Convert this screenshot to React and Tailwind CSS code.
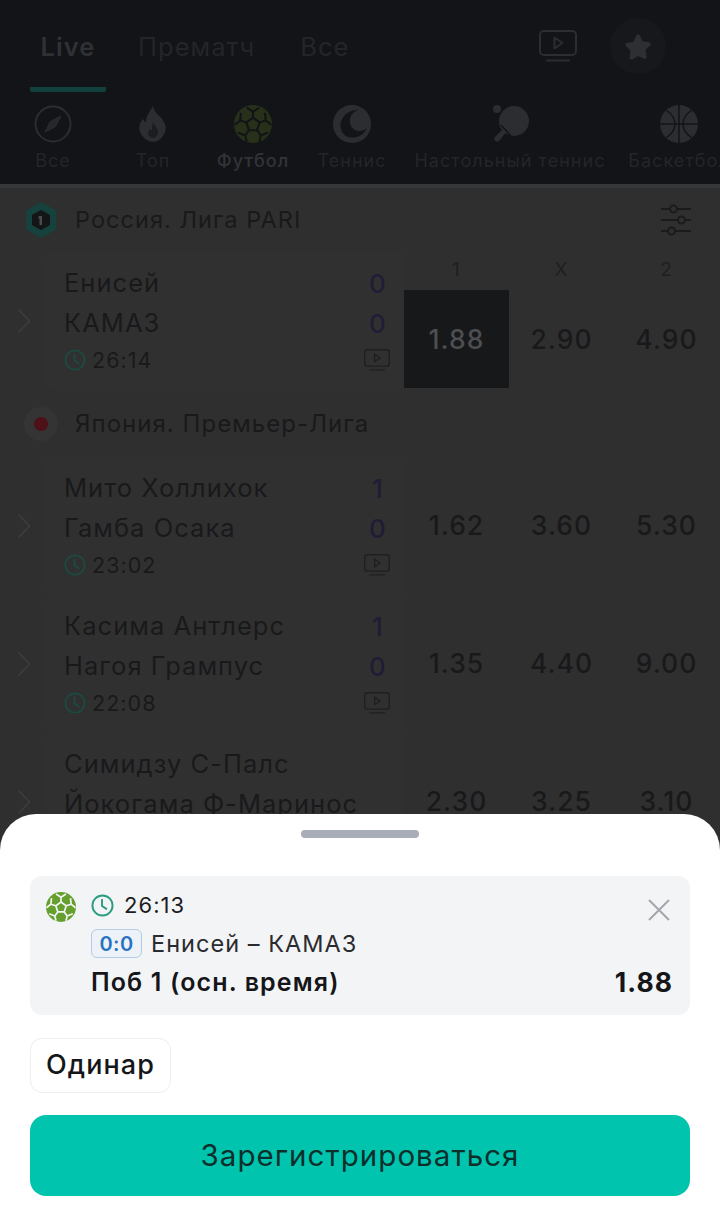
const sports = [
  { name: 'Все', icon: 'compass', width: 'w-[106px]' },
  { name: 'Топ', icon: 'flame', width: 'w-[94px]' },
  { name: 'Футбол', icon: 'ball', width: 'w-[106px]', active: true },
  { name: 'Теннис', icon: 'tennis', width: 'w-[92px]' },
  { name: 'Настольный теннис', icon: 'paddle', width: 'w-[224px]' },
  { name: 'Баскетбол', icon: 'basket', width: 'w-[114px]' },
];

const japan = [
  { home: 'Мито Холлихок', away: 'Гамба Осака', homeScore: 1, awayScore: 0, time: '23:02', odds: ['1.62', '3.60', '5.30'] },
  { home: 'Касима Антлерс', away: 'Нагоя Грампус', homeScore: 1, awayScore: 0, time: '22:08', odds: ['1.35', '4.40', '9.00'] },
  { home: 'Симидзу С-Палс', away: 'Йокогама Ф-Маринос', odds: ['2.30', '3.25', '3.10'] },
];

function Ball({ size, fill, line }) {
  return (
    <svg width={size} height={size} viewBox="0 0 30 30">
      <circle cx="15" cy="15" r="15" fill={fill} />
      <g fill="none" stroke={line} strokeWidth="1.7">
        <path d="M15 10l5.200 3.800-2 6.100h-6.400l-2-6.100z" />
        <path d="M15 10V5.200M20.200 13.800l4.900-1.600M18.200 19.900l3 4.100M11.800 19.900l-3 4.100M9.800 13.800l-4.900-1.600" />
        <path d="M15 5.200l-5-3.200M15 5.200l5-3.200M25.100 12.200l-.6-6M25.100 12.200l4.400 3.600M21.200 24l5.600-2.200M21.200 24l-1.200 4.800M8.800 24l-5.600-2.200M8.800 24l1.200 4.800M4.900 12.200l.6-6M4.900 12.200L.5 15.800" />
      </g>
    </svg>
  );
}

function Clock({ size, color }) {
  return (
    <svg width={size} height={size} viewBox="0 0 24 24" fill="none" stroke={color} strokeWidth="2" strokeLinecap="round" strokeLinejoin="round">
      <circle cx="12" cy="12" r="10.500" />
      <path d="M11.500 6v6.500l4.500 3" />
    </svg>
  );
}

function TvIcon({ width, height, color }) {
  return (
    <svg width={width} height={height} viewBox="0 0 38 32" fill="none" stroke={color} strokeWidth="2" strokeLinecap="round" strokeLinejoin="round">
      <rect x="1" y="1" width="36" height="24" rx="4" />
      <path d="M15.500 7.500l8 5.500-8 5.500z" />
      <path d="M8 30.500h22" />
    </svg>
  );
}

function SportIcon({ type }) {
  const c = '#2c2d30';
  if (type === 'ball') return <Ball size={38} fill="#27311a" line="#131417" />;
  if (type === 'compass') {
    return (
      <svg width="38" height="38" viewBox="0 0 38 38" fill="none" stroke={c} strokeWidth="2">
        <circle cx="19" cy="19" r="17.500" />
        <path d="M27 11l-5.500 10.500L11 27l5.500-10.500z" fill="#26272a" strokeWidth="1" />
      </svg>
    );
  }
  if (type === 'flame') {
    return (
      <svg width="30" height="38" viewBox="0 0 30 38">
        <path d="M15 1c1 6 5 8 9 13 4 5 5 10 2 15-2 5-7 8-11 8s-9-3-12-8C0 24 1 18 5 14c1 2 2 3 3 3 0-6 4-11 7-16z" fill={c} />
        <path d="M15 17c1 4 6 6 5 11-1 3-3 5-5 5s-5-2-5-5c0-2 1-3 2-4 1 1 1 1 2 1 0-3 0-5 1-8z" fill="#1c1d20" />
      </svg>
    );
  }
  if (type === 'tennis') {
    return (
      <svg width="38" height="38" viewBox="0 0 38 38">
        <circle cx="19" cy="19" r="19" fill={c} />
        <path d="M26 4.500C15 5 7 12 7.500 21c.3 5 3 9 7.500 11 8 2 15-1 19-9-3 3-8 4-12 2-5-3-6-8-4.500-13 1-3 4-6 8.500-7.500z" fill="#131417" />
      </svg>
    );
  }
  if (type === 'paddle') {
    return (
      <svg width="40" height="40" viewBox="0 0 40 40">
        <circle cx="7" cy="5" r="4" fill={c} />
        <circle cx="24" cy="17" r="15" fill={c} />
        <path d="M14 24L5 33c-1.500 1.500-1 3 .5 4s2.500 1 3.500 0l9-11z" fill={c} />
        <path d="M11 21l10 11" stroke="#131417" strokeWidth="1.500" />
      </svg>
    );
  }
  return (
    <svg width="38" height="38" viewBox="0 0 38 38" fill="none">
      <circle cx="19" cy="19" r="19" fill={c} />
      <path d="M0 19h38M19 0v38M6 5c6 4 9 9 9 14s-3 10-9 14M32 5c-6 4-9 9-9 14s3 10 9 14" stroke="#131417" strokeWidth="1.500" />
    </svg>
  );
}

function MatchRow({ match, selected }) {
  return (
    <div className="flex h-[138px]">
      <div className="flex w-[46px] shrink-0 items-center pl-[17px]">
        <svg width="14" height="26" viewBox="0 0 14 26" fill="none" stroke="#3c3c3e" strokeWidth="1.800">
          <path d="M1.500 1.500L12.500 13 1.500 24.500" />
        </svg>
      </div>
      <div className="w-[358px] shrink-0 rounded-[6px] bg-[#303030] pl-[18px] pr-[14px] pt-[11px]">
        <div className="flex h-[40px] items-center justify-between text-[#19191b]">
          <span className="whitespace-nowrap text-[25.500px]">{match.home}</span>
          <span className="w-[24px] text-center text-[26px] font-medium text-[#1f1d36]">{match.homeScore}</span>
        </div>
        <div className="flex h-[40px] items-center justify-between text-[#19191b]">
          <span className="whitespace-nowrap text-[25.500px]">{match.away}</span>
          <span className="w-[24px] text-center text-[26px] font-medium text-[#1f1d36]">{match.awayScore}</span>
        </div>
        {match.time && (
          <div className="flex h-[34px] items-center justify-between">
            <div className="flex items-center gap-[6px] text-[21.500px] text-[#19191b]">
              <Clock size={22} color="#1c4a41" />
              <span>{match.time}</span>
            </div>
            <TvIcon width={26} height={22} color="#1e1f21" />
          </div>
        )}
      </div>
      <div className={`flex flex-1 text-[26.500px] font-medium text-[#19191b] ${selected ? 'pt-[38px]' : 'pt-[19px]'}`}>
        {match.odds.map((odd, i) => (
          <div
            key={odd}
            className={`flex h-[98px] w-[105px] items-center justify-center pt-[2px] ${selected && i === 0 ? 'bg-[#17181a] text-[#4d4e51]' : ''}`}
          >
            {odd}
          </div>
        ))}
      </div>
    </div>
  );
}

function App() {
  return (
    <div className="relative h-[1226px] w-[720px] overflow-hidden bg-[#2f2f2f] font-['Inter',sans-serif] tracking-[0.065em]">
      {/* Top nav */}
      <div className="bg-[#131417]">
        <div className="flex h-[92px] items-start justify-between pl-[30px] pr-[54px]">
          <div className="flex text-[25.500px] text-[#242528]">
            <div className="flex h-[92px] w-[76px] flex-col items-center rounded-b-[2px] border-b-[5px] border-[#12403c] pt-[28px] font-semibold text-[#303135]">
              Live
            </div>
            <div className="ml-[32px] pt-[28px]">Прематч</div>
            <div className="ml-[45px] pt-[28px]">Все</div>
          </div>
          <div className="flex items-center pt-[18px]">
            <TvIcon width={38} height={32} color="#2c2d30" />
            <div className="ml-[33px] flex h-[56px] w-[56px] items-center justify-center rounded-full bg-[#17181b]">
              <svg width="30" height="30" viewBox="0 0 24 24" fill="#2e2f33">
                <path d="M12 2.500c.7 0 1.200.4 1.500 1l2.200 4.700 5 .7c1.400.2 1.900 1.800.9 2.700l-3.600 3.600.8 5.100c.2 1.400-1.200 2.400-2.400 1.700L12 20l-4.400 2.500c-1.200.7-2.600-.3-2.400-1.700l.8-5.100-3.600-3.600c-1-.9-.5-2.500.9-2.700l5-.7 2.200-4.700c.3-.6.8-1 1.500-1z" />
              </svg>
            </div>
          </div>
        </div>

        {/* Sports */}
        <div className="flex h-[92px] overflow-hidden">
          {sports.map((s) => (
            <div key={s.name} className={`${s.width} flex shrink-0 flex-col items-center pt-[13px]`}>
              <div className="flex h-[38px] items-center">
                <SportIcon type={s.icon} />
              </div>
              <span className={`mt-[4px] whitespace-nowrap text-[18px] ${s.active ? 'font-medium text-[#323337]' : 'text-[#242528]'}`}>
                {s.name}
              </span>
            </div>
          ))}
        </div>
      </div>
      <div className="h-[4px] bg-[#363738]" />

      {/* Russia league */}
      <div className="flex h-[64px] items-center justify-between pl-[24px] pr-[28px]">
        <div className="flex items-center gap-[17px]">
          <svg width="34" height="38" viewBox="0 0 34 38">
            <path d="M17 1l15 8.500v19L17 37 2 28.500v-19z" fill="#16423d" />
            <path d="M17 9l9 5v10l-9 5-9-5V14z" fill="#141517" />
            <path d="M15 15h3v9h-2.500v-6.500H14z" fill="#4a4b4d" />
          </svg>
          <span className="text-[23.500px] text-[#19191b]">Россия. Лига PARI</span>
        </div>
        <svg width="32" height="32" viewBox="0 0 32 32" fill="none" stroke="#1a1b1d" strokeWidth="2">
          <path d="M1 5h9M17 5h14M1 16h17M25 16h6M1 27h7M15 27h16" />
          <circle cx="13.500" cy="5" r="3.500" />
          <circle cx="21.500" cy="16" r="3.500" />
          <circle cx="11.500" cy="27" r="3.500" />
        </svg>
      </div>

      {/* 1 X 2 labels sit over the first row's top */}
      <div className="relative">
        <div className="absolute left-[404px] top-[4px] flex text-[19px] text-[#1e1f21]">
          <span className="w-[105px] text-center">1</span>
          <span className="w-[105px] text-center">X</span>
          <span className="w-[105px] text-center">2</span>
        </div>
        <MatchRow
          selected
          match={{ home: 'Енисей', away: 'КАМАЗ', homeScore: 0, awayScore: 0, time: '26:14', odds: ['1.88', '2.90', '4.90'] }}
        />
      </div>

      {/* Japan league */}
      <div className="flex h-[67px] items-center gap-[17px] pl-[24px]">
        <div className="flex h-[34px] w-[34px] items-center justify-center rounded-full bg-[#343434]">
          <div className="h-[14px] w-[14px] rounded-full bg-[#4f1019]" />
        </div>
        <span className="text-[24px] text-[#19191b]">Япония. Премьер-Лига</span>
      </div>
      {japan.map((m) => (
        <MatchRow key={m.home} match={m} />
      ))}

      {/* Bottom sheet */}
      <div className="absolute inset-x-0 bottom-0 h-[412px] rounded-t-[36px] bg-white px-[30px] pt-[16px]">
        <div className="mx-auto h-[8px] w-[118px] rounded-full bg-[#a9adb8]" />
        <div className="mt-[38px] h-[139px] rounded-[12px] bg-[#f3f4f6] pl-[16px] pr-[17px] pt-[16px]">
          <div className="flex">
            <div className="w-[45px] shrink-0">
              <Ball size={30} fill="#659f2e" line="#f3f4f6" />
            </div>
            <div className="min-w-0 flex-1">
              <div className="flex h-[26px] items-center justify-between">
                <div className="flex items-center gap-[10px] text-[22px] text-[#1c1d20]">
                  <Clock size={23} color="#2a9d80" />
                  <span>26:13</span>
                </div>
                <svg width="24" height="24" viewBox="0 0 24 24" fill="none" stroke="#a3a6ad" strokeWidth="2" className="mr-[2px] mt-[10px]">
                  <path d="M2 2l20 20M22 2L2 22" />
                </svg>
              </div>
              <div className="mt-[11px] flex h-[29px] items-center gap-[9px]">
                <div className="flex h-[29px] w-[51px] items-center justify-center rounded-[6px] border-[1.500px] border-[#b5cde4] bg-[#edf2f8] text-[20px] font-semibold tracking-[0.02em] text-[#2874c0]">
                  0:0
                </div>
                <span className="text-[23.500px] text-[#2a2b2e]">Енисей – КАМАЗ</span>
              </div>
              <div className="mt-[8px] flex h-[34px] items-center justify-between text-[#15161a]">
                <span className="text-[25px] font-semibold tracking-[0.045em]">Поб 1 (осн. время)</span>
                <span className="text-[26.500px] font-bold tracking-[0.04em]">1.88</span>
              </div>
            </div>
          </div>
        </div>
        <div className="mt-[23px] flex h-[55px] w-[141px] items-center justify-center rounded-[12px] border border-[#eceef0] text-[27px] font-medium text-[#15161a]">
          Одинар
        </div>
        <button className="mt-[22px] flex h-[81px] w-full items-center justify-center rounded-[16px] bg-[#00c4ae] text-[29.500px] text-[#0d2f2c]">
          Зарегистрироваться
        </button>
      </div>
    </div>
  );
}

export default App;
